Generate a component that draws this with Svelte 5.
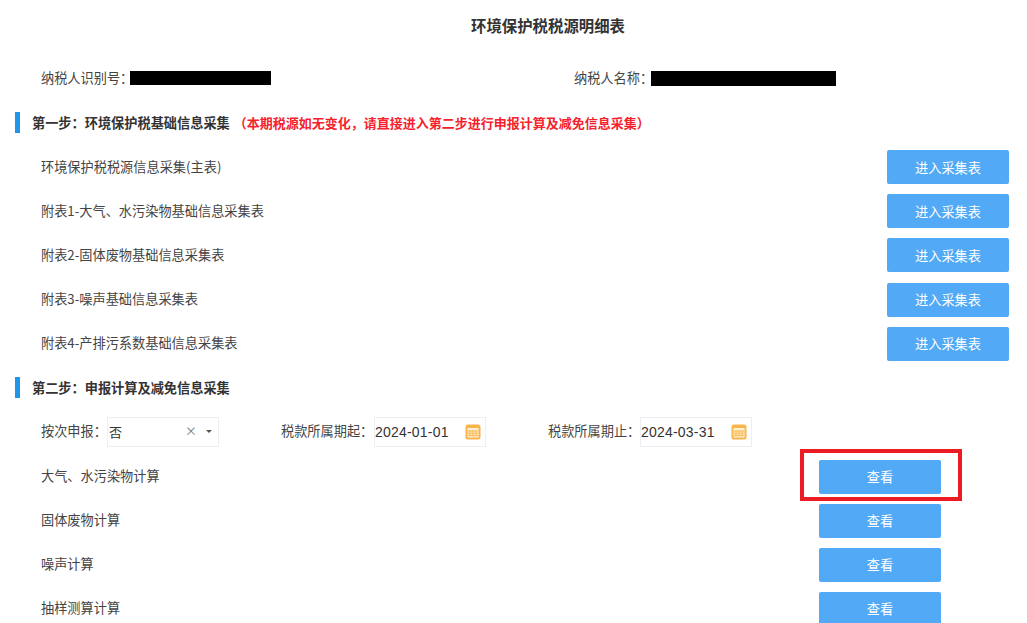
<script lang="ts">
  const collectRows = [
    "环境保护税税源信息采集(主表)",
    "附表1-大气、水污染物基础信息采集表",
    "附表2-固体废物基础信息采集表",
    "附表3-噪声基础信息采集表",
    "附表4-产排污系数基础信息采集表",
  ];
  const calcRows = ["大气、水污染物计算", "固体废物计算", "噪声计算", "抽样测算计算"];
</script>

{#snippet calendar()}
  <svg class="cal" width="16" height="16" viewBox="0 0 16 16" aria-hidden="true">
    <rect x="0.5" y="0.5" width="15" height="15" rx="2.5" fill="#f9b44a" />
    <rect x="2.5" y="4" width="11" height="9.5" fill="#fdf0d5" />
    <path d="M5 6v6.5M8 6v6.5M11 6v6.5M3 7h10M3 9.2h10M3 11.4h10" stroke="#f9b44a" stroke-width="0.9" />
  </svg>
{/snippet}

<div class="page">
  <h1>环境保护税税源明细表</h1>

  <div class="info">
    <div class="info-item first">
      <span class="lbl-id">纳税人识别号：</span><i class="mask mask-id"></i>
    </div>
    <div class="info-item">
      <span class="lbl-name">纳税人名称：</span><i class="mask mask-name"></i>
    </div>
  </div>

  <h2>第一步：环境保护税基础信息采集<em>（本期税源如无变化，请直接进入第二步进行申报计算及减免信息采集）</em></h2>

  <div class="list first-list">
    {#each collectRows as name}
      <div class="row">
        <span>{name}</span>
        <button type="button">进入采集表</button>
      </div>
    {/each}
  </div>

  <h2 class="second">第二步：申报计算及减免信息采集</h2>

  <div class="form">
    <label class="lbl-a">按次申报：</label>
    <div class="box select">
      <span class="val">否</span>
      <span class="clear">×</span>
      <span class="caret"></span>
    </div>
    <label class="lbl-b">税款所属期起：</label>
    <div class="box date">
      <span class="num">2024-01-01</span>
      {@render calendar()}
    </div>
    <label class="lbl-c">税款所属期止：</label>
    <div class="box date">
      <span class="num">2024-03-31</span>
      {@render calendar()}
    </div>
  </div>

  <div class="list calc">
    {#each calcRows as name, i}
      <div class="row">
        <span>{name}</span>
        <div class="action">
          <button type="button">查看</button>
          {#if i === 0}<div class="highlight"></div>{/if}
        </div>
      </div>
    {/each}
  </div>
</div>

<style>
  :global(body) {
    margin: 0;
    overflow: hidden;
    background: #fff;
  }
  .page {
    height: 623px;
    overflow: hidden;
    font-family: "Noto Sans CJK SC", "Liberation Sans", sans-serif;
    font-size: 13.2px;
    color: #444;
  }
  h1 {
    margin: 0;
    height: 52px;
    line-height: 51px;
    text-align: center;
    font-size: 15.4px;
    font-weight: 700;
    color: #333;
    padding-left: 69px;
  }
  .info {
    display: flex;
    height: 32px;
    margin-top: 10px;
    padding-left: 41px;
    align-items: center;
  }
  .info-item {
    display: flex;
    align-items: center;
  }
  .info-item.first {
    width: 533px;
  }
  .info-item span {
    padding-bottom: 2px;
    white-space: nowrap;
  }
  .lbl-id { width: 89px; }
  .lbl-name { width: 77px; }
  .mask {
    display: block;
    background: #000;
  }
  .mask-id {
    width: 141px;
    height: 14px;
    margin-bottom: 1px;
  }
  .mask-name {
    width: 185px;
    height: 15px;
    margin-top: 1px;
  }
  h2 {
    margin: 18px 0 17px 15px;
    height: 21px;
    line-height: 21px;
    padding-left: 12px;
    border-left: 5px solid #2196e8;
    font-size: 13.2px;
    font-weight: 700;
    color: #333;
    white-space: nowrap;
  }
  h2.second {
    margin-top: 16.2px;
    margin-bottom: 19px;
  }
  h2 em {
    font-style: normal;
    font-size: 13px;
    margin-left: 4px;
    color: #f5222d;
  }
  .list {
    display: flex;
    flex-direction: column;
    gap: 10px;
    padding: 0 18px 0 41px;
  }
  .first-list {
    gap: 10.2px;
  }
  .row {
    display: flex;
    justify-content: space-between;
    align-items: center;
    height: 34px;
  }
  .row > span {
    padding-bottom: 2px;
  }
  button {
    width: 122px;
    height: 34px;
    border: 0;
    border-radius: 2px;
    background: #52a9f5;
    color: #fff;
    font: inherit;
    padding: 0;
  }
  .form {
    display: flex;
    align-items: center;
    height: 30px;
    padding-left: 41px;
  }
  .form label {
    white-space: nowrap;
    padding-bottom: 2px;
  }
  .lbl-a { width: 66px; }
  .lbl-b { width: 93px; margin-left: 62px; }
  .lbl-c { width: 92px; margin-left: 62px; }
  .box {
    box-sizing: border-box;
    width: 112px;
    height: 30px;
    border: 1px solid #eceff3;
    display: flex;
    align-items: center;
    color: #333;
  }
  .select .val {
    margin-left: 1px;
    flex: 1;
    font-size: 13px;
  }
  .clear {
    color: #777;
    font-size: 12px;
    margin-right: 9px;
    padding-bottom: 2px;
  }
  .caret {
    width: 0;
    height: 0;
    border-left: 3px solid transparent;
    border-right: 3px solid transparent;
    border-top: 3px solid #555;
    margin-right: 6px;
  }
  .date {
    justify-content: space-between;
    padding-right: 4px;
  }
  .num {
    font-size: 14px;
    font-family: "Liberation Sans", sans-serif;
    letter-spacing: 0.2px;
  }
  .calc {
    margin-top: 13px;
    padding-right: 86px;
  }
  .action {
    position: relative;
    display: flex;
  }
  .highlight {
    position: absolute;
    left: -19px;
    top: -11px;
    width: 162px;
    height: 52px;
    box-sizing: border-box;
    border: 4px solid #ed1c24;
    pointer-events: none;
  }
</style>
